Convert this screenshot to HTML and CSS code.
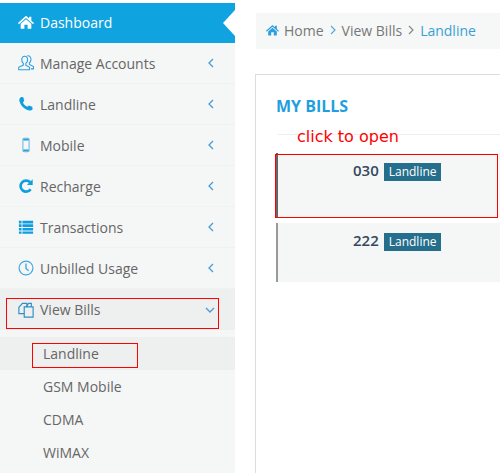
FILE: index.html

```html
<!DOCTYPE html>
<html lang="en">
<head>
<meta charset="UTF-8">
<meta name="viewport" content="width=device-width, initial-scale=1.0">
<title>My Bills</title>
<link rel="stylesheet" href="styles.css">
</head>
<body>

<div class="page">
    <aside class="sidebar">
        <a class="nav-item active">
            <svg class="nav-icon" viewBox="0 0 18 16"><path fill="#fff" d="M9 1 L12.5 4.2 V2 H15 V6.5 L18 9.2 L17 10.4 L9 3.4 L1 10.4 L0 9.2 Z M3 10 L9 4.8 L15 10 V15.5 H10.8 V11 H7.2 V15.5 H3 Z"/></svg>
            <span>Dashboard</span>
        </a>
        <a class="nav-item">
            <svg class="nav-icon" viewBox="0 0 18 18" fill="none" stroke="#2f9fdc" stroke-width="1.2"><path d="M7.5 1.5 C5 1.5 4 3.5 4.3 6 C4.5 7.5 5.2 8.8 6 9.5 V11.3 L0.8 13.8 V16.5 H13 V13.8 L8.8 11.5 V9.5 C9.8 8.7 10.6 7.5 10.8 6 C11 3.5 10 1.5 7.5 1.5 Z"/><path d="M10.5 1 C13.2 0.6 14.8 2.6 14.6 5.2 C14.5 6.8 13.7 8.2 12.8 9 V10.6 L17.4 13 V15.6 H14.5"/></svg>
            <span>Manage Accounts</span>
            <svg class="chevron" viewBox="0 0 8 10"><path d="M6 1 L2 5 L6 9"/></svg>
        </a>
        <a class="nav-item">
            <svg class="nav-icon" viewBox="0 0 18 18"><path fill="#0f9fe0" d="M3.5 1 L6 1.5 L7 5.5 L5.5 7 C6.3 9.2 8.2 11.2 10.5 12.2 L12 10.8 L16 12 L16.5 14.8 C15.5 16 14 16.5 12.5 16.3 C7.5 15.5 2.5 10.5 1.5 5 C1.3 3.4 2.2 1.8 3.5 1 Z"/></svg>
            <span>Landline</span>
            <svg class="chevron" viewBox="0 0 8 10"><path d="M6 1 L2 5 L6 9"/></svg>
        </a>
        <a class="nav-item">
            <svg class="nav-icon" viewBox="0 0 18 18" fill="none"><rect x="5.5" y="1.5" width="7" height="15" rx="1.5" stroke="#6db8e6" stroke-width="1.2"/><rect x="6" y="2" width="6" height="2" fill="#2f9fdc"/><rect x="6" y="14" width="6" height="2" fill="#2f9fdc"/></svg>
            <span>Mobile</span>
            <svg class="chevron" viewBox="0 0 8 10"><path d="M6 1 L2 5 L6 9"/></svg>
        </a>
        <a class="nav-item">
            <svg class="nav-icon" viewBox="0 0 18 18"><path fill="none" stroke="#0f9fe0" stroke-width="3" d="M14.2 12.6 A6.2 6.2 0 1 1 13.6 4.8"/><path fill="#0f9fe0" d="M16.5 1.5 V8 H10 Z"/></svg>
            <span>Recharge</span>
            <svg class="chevron" viewBox="0 0 8 10"><path d="M6 1 L2 5 L6 9"/></svg>
        </a>
        <a class="nav-item">
            <svg class="nav-icon" viewBox="0 0 18 18"><path fill="#0f9fe0" d="M1 2 H4 V5 H1 Z M5 2 H17 V5 H5 Z M1 6 H4 V9 H1 Z M5 6 H17 V9 H5 Z M1 10 H4 V13 H1 Z M5 10 H17 V13 H5 Z M1 14 H4 V16.5 H1 Z M5 14 H17 V16.5 H5 Z"/></svg>
            <span>Transactions</span>
            <svg class="chevron" viewBox="0 0 8 10"><path d="M6 1 L2 5 L6 9"/></svg>
        </a>
        <a class="nav-item">
            <svg class="nav-icon" viewBox="0 0 18 18" fill="none" stroke="#3da6e0"><circle cx="9" cy="9" r="7.8" stroke-width="1.3"/><path stroke-width="1.5" d="M9 4 V9.5 L12 12"/></svg>
            <span>Unbilled Usage</span>
            <svg class="chevron" viewBox="0 0 8 10"><path d="M6 1 L2 5 L6 9"/></svg>
        </a>
        <a class="nav-item open">
            <svg class="nav-icon" viewBox="0 0 18 18" fill="none" stroke="#2f8fc8" stroke-width="1.3"><path d="M7 5.5 H17 V17 H7 Z"/><path d="M7 13 H1 V6 L5 1.5 H10 V5.5"/><path d="M10 5.5 V4 L12 1.5 H15 V5.5"/></svg>
            <span>View Bills</span>
            <svg class="chevron" viewBox="0 0 10 8"><path d="M1 2 L5 6 L9 2"/></svg>
        </a>
        <div class="submenu">
            <a class="sub-item current">Landline</a>
            <a class="sub-item">GSM Mobile</a>
            <a class="sub-item">CDMA</a>
            <a class="sub-item">WiMAX</a>
        </div>
    </aside>

    <main class="content">
        <div class="breadcrumb">
            <svg class="crumb-icon" viewBox="0 0 18 16"><path fill="#2f9fdc" d="M9 1 L12.5 4.2 V2 H15 V6.5 L18 9.2 L17 10.4 L9 3.4 L1 10.4 L0 9.2 Z M3 10 L9 4.8 L15 10 V15.5 H10.8 V11 H7.2 V15.5 H3 Z"/></svg>
            <span>Home</span>
            <svg class="crumb-sep" viewBox="0 0 6 10"><path stroke="#5aa9d6" d="M1 1 L5 5 L1 9"/></svg>
            <span>View Bills</span>
            <svg class="crumb-sep" viewBox="0 0 6 10"><path stroke="#888" d="M1 1 L5 5 L1 9"/></svg>
            <span class="crumb-current">Landline</span>
        </div>

        <section class="panel">
            <h2 class="panel-title">MY BILLS</h2>
            <div class="panel-note"><span>click to open</span></div>
            <div class="bill first">
                <div class="bill-line"><b>030</b><span class="tag">Landline</span></div>
            </div>
            <div class="bill second">
                <div class="bill-line"><b>222</b><span class="tag">Landline</span></div>
            </div>
        </section>
    </main>
</div>

<!-- red marks drawn over the screenshot -->
<div class="mark mark-nav"></div>
<div class="mark mark-sub"></div>
<div class="mark mark-bill"></div>

</body>
</html>
```

FILE: styles.css

```css
html, body {
    margin: 0;
    padding: 0;
    height: 100%;
}
body {
    font-family: "Open Sans", sans-serif;
    font-size: 14px;
    color: #666;
    background-color: #fff;
    overflow: hidden;
}
.page {
    display: flex;
    height: 473px;
}

.sidebar {
    width: 235px;
    flex: none;
    padding-top: 3px;
    box-sizing: border-box;
    background: linear-gradient(#fff 3px, #f5f6f6 3px);
}
.nav-item {
    position: relative;
    display: flex;
    align-items: center;
    height: 41px;
    padding: 0 20px 0 18px;
    box-sizing: border-box;
    border-bottom: 1px solid #f0f1f1;
}
.nav-item span {
    flex: 1;
    margin-left: 6px;
}
.nav-icon {
    width: 16px;
    height: 16px;
    flex: none;
}
.chevron {
    width: 8px;
    height: 10px;
    flex: none;
    fill: none;
    stroke: #4b9bd5;
    stroke-width: 1.3;
}
.nav-item.active {
    height: 40px;
    padding-bottom: 2px;
    background-color: #0fa3e0;
    color: #fff;
    border-bottom: 0;
}
.nav-item.active::after {
    content: "";
    position: absolute;
    right: 0;
    top: 7px;
    border-style: solid;
    border-width: 13px 12px 13px 0;
    border-color: transparent #fff transparent transparent;
}
.nav-item.open {
    background-color: #eeefef;
    border-bottom: 0;
}
.nav-item.open .chevron {
    width: 10px;
    height: 8px;
}
.submenu {
    padding-top: 7px;
}
.sub-item {
    display: flex;
    align-items: center;
    height: 33px;
    padding-left: 43px;
}
.sub-item.current {
    background-color: #eeefef;
}

.content {
    flex: 1;
    min-width: 0;
    padding: 13px 0 0 20px;
}
.breadcrumb {
    display: flex;
    align-items: center;
    height: 36px;
    box-sizing: border-box;
    margin-left: 1px;
    padding: 0 0 2px 10px;
    background-color: #f6f7f7;
    color: #777;
}
.crumb-icon {
    width: 13px;
    height: 12px;
    margin-right: 5px;
}
.crumb-sep {
    width: 6px;
    height: 10px;
    margin: 0 6px;
    fill: none;
    stroke-width: 1.2;
}
.crumb-current {
    color: #3a9fd6;
}

.panel {
    margin-top: 25px;
    height: 400px;
    padding: 20px 0 0 20px;
    border-top: 1px solid #ddd;
    border-left: 1px solid #ddd;
}
.panel-title {
    margin: 0;
    font-size: 16px;
    line-height: 22px;
    font-weight: 700;
    color: #1f9fe0;
}
.panel-note {
    height: 18px;
    margin: 17px 0 0 2px;
    border-top: 1px solid #eee;
}
.panel-note span {
    display: block;
    padding-left: 19px;
    font-family: "DejaVu Sans", sans-serif;
    font-size: 16px;
    line-height: 4px;
    color: #f00;
}
.bill {
    background-color: #f5f6f6;
    border-left: 2px solid #999;
    box-sizing: border-box;
    margin-bottom: 6px;
}
.bill.first {
    height: 64px;
    border-left-color: #666;
}
.bill.second {
    height: 59px;
}
.bill-line {
    display: flex;
    align-items: flex-start;
    padding: 10px 0 0 75px;
}
.bill-line b {
    margin-top: -2px;
    font-size: 15px;
    line-height: 18px;
    font-weight: 600;
    color: #34495e;
}
.tag {
    margin-left: 5px;
    padding: 0 4px 0 5px;
    height: 18px;
    line-height: 18px;
    font-size: 12px;
    color: #fff;
    background-color: #256f8d;
}

.mark {
    position: absolute;
    box-sizing: border-box;
    border: 1px solid #f00;
}
.mark-nav {
    left: 6px;
    top: 298px;
    width: 213px;
    height: 31px;
}
.mark-sub {
    left: 32px;
    top: 343px;
    width: 106px;
    height: 25px;
}
.mark-bill {
    left: 275px;
    top: 154px;
    width: 223px;
    height: 64px;
}
```
